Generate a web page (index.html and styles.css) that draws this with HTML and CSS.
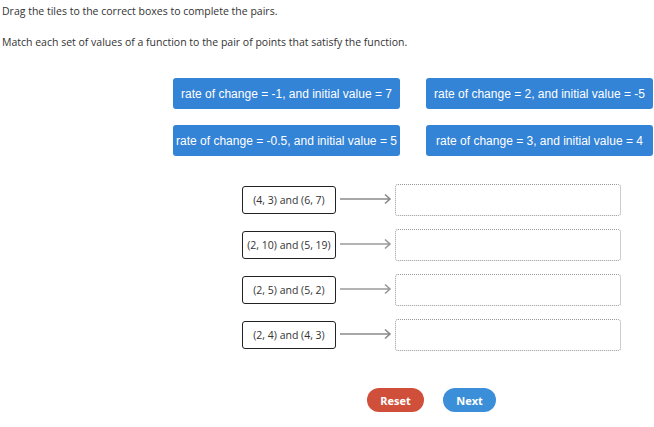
FILE: index.html
```html
<!DOCTYPE html>
<html lang="en">
<head>
    <meta charset="UTF-8">
    <title>Match the pairs</title>
    <link rel="stylesheet" href="styles.css">
</head>
<body>

<div class="page">
    <p class="instr">Drag the tiles to the correct boxes to complete the pairs.</p>
    <p class="instr">Match each set of values of a function to the pair of points that satisfy the function.</p>

    <div class="tiles">
        <div class="tile">rate of change = -1, and initial value = 7</div>
        <div class="tile">rate of change = 2, and initial value = -5</div>
        <div class="tile">rate of change = -0.5, and initial value = 5</div>
        <div class="tile">rate of change = 3, and initial value = 4</div>
    </div>

    <div class="pairs">
        <div class="pair">
            <div class="points">(4, 3) and (6, 7)</div>
            <svg class="arrow" width="54" height="12" viewBox="0 0 54 12"><path d="M1 6H51M46 1.5L51 6L46 10.5" fill="none" stroke="#8a8a8a" stroke-width="1.6"/></svg>
            <div class="drop"></div>
        </div>
        <div class="pair">
            <div class="points">(2, 10) and (5, 19)</div>
            <svg class="arrow" width="54" height="12" viewBox="0 0 54 12"><path d="M1 6H51M46 1.5L51 6L46 10.5" fill="none" stroke="#9a9a9a" stroke-width="1.6"/></svg>
            <div class="drop"></div>
        </div>
        <div class="pair">
            <div class="points">(2, 5) and (5, 2)</div>
            <svg class="arrow" width="54" height="12" viewBox="0 0 54 12"><path d="M1 6H51M46 1.5L51 6L46 10.5" fill="none" stroke="#9a9a9a" stroke-width="1.6"/></svg>
            <div class="drop"></div>
        </div>
        <div class="pair">
            <div class="points">(2, 4) and (4, 3)</div>
            <svg class="arrow" width="54" height="12" viewBox="0 0 54 12"><path d="M1 6H51M46 1.5L51 6L46 10.5" fill="none" stroke="#8a8a8a" stroke-width="1.6"/></svg>
            <div class="drop"></div>
        </div>
    </div>

    <div class="buttons">
        <button class="btn reset">Reset</button>
        <button class="btn next">Next</button>
    </div>
</div>

</body>
</html>
```

FILE: styles.css
```css
body {
    margin: 0;
    font-family: "Open Sans", sans-serif;
    color: #333;
    background-color: #fff;
}
.page {
    padding: 3px 0 0 2px;
}
.instr {
    margin: 0 0 15px 0;
    font-size: 10.5px;
    line-height: 16px;
}
.tiles {
    display: grid;
    grid-template-columns: 227px 227px;
    column-gap: 26px;
    row-gap: 16px;
    margin: 28px 0 0 171px;
}
.tile {
    height: 31px;
    background-color: #3383d6;
    color: #fff;
    border-radius: 3px;
    font-family: "Liberation Sans", Arial, sans-serif;
    font-size: 12px;
    display: flex;
    align-items: center;
    justify-content: center;
    white-space: nowrap;
}
.pairs {
    display: flex;
    flex-direction: column;
    gap: 13px;
    margin: 28px 0 0 240px;
}
.pair {
    display: flex;
    align-items: center;
    height: 32px;
}
.points {
    width: 92px;
    height: 26px;
    border: 1px solid #222;
    border-radius: 3px;
    font-size: 10.5px;
    display: flex;
    align-items: center;
    justify-content: center;
    white-space: nowrap;
}
.arrow {
    margin-left: 3px;
    margin-top: -2px;
}
.drop {
    width: 224px;
    height: 30px;
    margin-left: 2px;
    border: 1px dotted #999;
    border-radius: 3px;
}
.buttons {
    display: flex;
    gap: 19px;
    margin: 37px 0 0 365px;
}
.btn {
    height: 24px;
    border: none;
    border-radius: 12px;
    color: #fff;
    font-family: "Open Sans", sans-serif;
    font-weight: bold;
    font-size: 11px;
    cursor: pointer;
}
.reset {
    width: 57px;
    background-color: #cf4f3a;
}
.next {
    width: 53px;
    background-color: #3b8ed8;
}
```
